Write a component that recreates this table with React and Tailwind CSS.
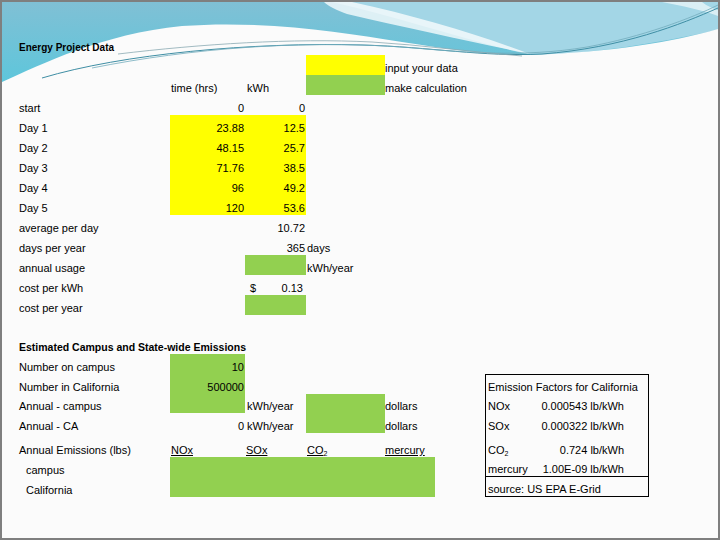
import React from 'react';

const Y = 'bg-[#ffff00]';
const G = 'bg-[#92d050]';

function Row({ h = 'h-[20px]', children }) {
  return (
    <div className={`grid grid-cols-[168px_75px_61px_79px_50px_50px_164px] ${h}`}>
      {children}
    </div>
  );
}

function Cell({ className = '', children }) {
  return (
    <div className={`flex items-end leading-[14px] whitespace-nowrap ${className}`}>
      {children}
    </div>
  );
}

const Label = ({ children, className = '' }) => <Cell className={`pl-[17px] ${className}`}>{children}</Cell>;
const Num = ({ children, className = '' }) => <Cell className={`justify-end pr-[1px] ${className}`}>{children}</Cell>;

const Wave = () => (
  <svg className="absolute left-0 top-0 pointer-events-none" width="716" height="100" viewBox="0 0 716 100">
    <defs>
      <linearGradient id="sky" x1="0" y1="0" x2="0" y2="1">
        <stop offset="0" stopColor="#80c0d5" />
        <stop offset="0.8" stopColor="#5ec6db" />
      </linearGradient>
    </defs>
    <rect width="716" height="100" fill="url(#sky)" />
    <path d="M330 0 L716 0 L716 28 C650 42 590 52 530 53 C470 40 400 16 330 0 Z" fill="#a3d6e6" />
    <path d="M322 0 L350 0 C415 14 478 33 528 52 C470 40 410 27 345 12 C334 8 326 4 322 0 Z" fill="#ffffff" opacity="0.75" />
    <path d="M660 0 L700 0 C705 4 710 6 716 8 L716 14 C700 8 680 4 660 0 Z" fill="#ffffff" opacity="0.6" />
    <path d="M0 80 C40 62 100 32 180 24 C260 18 340 30 400 40 C450 48 490 53 530 53 C610 50 670 40 716 27 L716 100 L0 100 Z" fill="#fbfbfb" />
    <path d="M40 76 C120 52 250 40 360 43 C430 45 480 55 540 52 C620 46 680 22 716 6" fill="none" stroke="#3f8ea4" strokeWidth="1" />
    <path d="M90 66 C190 46 300 38 400 45 C460 50 520 56 585 45 C640 35 690 16 716 3" fill="none" stroke="#72acbd" strokeWidth="0.8" />
    <path d="M116 52 C200 42 290 36 370 40 C420 43 470 50 520 54" fill="none" stroke="#8aa9b2" strokeWidth="0.8" />
  </svg>
);

export default function App() {
  return (
    <div
      className="relative w-[720px] h-[540px] overflow-hidden border-2 border-[#7f7f7f] bg-[#fbfbfb] text-[11px] text-black"
      style={{ fontFamily: '"Liberation Sans", Arial, sans-serif' }}
    >
      <Wave />
      <div className="relative flex flex-col">
        <div className="h-[39px]" />
        <Row h="h-[14px]">
          <Label className="font-bold text-[10px] col-span-3">Energy Project Data</Label>
        </Row>
        <Row>
          <Cell />
          <Cell />
          <Cell />
          <Cell className={Y} />
          <Cell className="col-span-3">input your data</Cell>
        </Row>
        <Row>
          <Cell />
          <Cell className="pl-[1px]">time (hrs)</Cell>
          <Cell className="pl-[2px]">kWh</Cell>
          <Cell className={G} />
          <Cell className="col-span-3">make calculation</Cell>
        </Row>
        <Row>
          <Label>start</Label>
          <Num>0</Num>
          <Num>0</Num>
        </Row>
        {[
          ['Day 1', '23.88', '12.5'],
          ['Day 2', '48.15', '25.7'],
          ['Day 3', '71.76', '38.5'],
          ['Day 4', '96', '49.2'],
          ['Day 5', '120', '53.6'],
        ].map(([d, t, k]) => (
          <Row key={d}>
            <Label>{d}</Label>
            <Num className={Y}>{t}</Num>
            <Num className={Y}>{k}</Num>
          </Row>
        ))}
        <Row>
          <Label>average per day</Label>
          <Cell />
          <Num>10.72</Num>
        </Row>
        <Row>
          <Label>days per year</Label>
          <Cell />
          <Num>365</Num>
          <Cell className="pl-[1px]">days</Cell>
        </Row>
        <Row>
          <Label>annual usage</Label>
          <Cell />
          <Cell className={G} />
          <Cell className="pl-[1px]">kWh/year</Cell>
        </Row>
        <Row>
          <Label>cost per kWh</Label>
          <Cell />
          <Cell className="justify-between pl-[5px] pr-[3px]">
            <span>$</span>
            <span>0.13</span>
          </Cell>
        </Row>
        <Row>
          <Label>cost per year</Label>
          <Cell />
          <Cell className={G} />
        </Row>
        <Row h="h-[19px]" />
        <Row>
          <Label className="font-bold text-[10.5px] col-span-4">Estimated Campus and State-wide Emissions</Label>
        </Row>
        <Row>
          <Label>Number on campus</Label>
          <Num className={G}>10</Num>
        </Row>
        <Row>
          <Label>Number in California</Label>
          <Num className={G}>500000</Num>
          <Cell />
          <Cell />
          <Cell />
          <Cell />
          <Cell className="border-x border-t border-black pl-[2px]">Emission Factors for California</Cell>
        </Row>
        <Row h="h-[19px]">
          <Label>Annual - campus</Label>
          <Cell className={G} />
          <Cell className="pl-[2px]">kWh/year</Cell>
          <Cell className={G} />
          <Cell>dollars</Cell>
          <Cell />
          <Cell className="border-x border-black pl-[2px] pr-[24px] justify-between">
            <span>NOx</span>
            <span>0.000543 lb/kWh</span>
          </Cell>
        </Row>
        <Row>
          <Label>Annual - CA</Label>
          <Num>0</Num>
          <Cell className="pl-[2px]">kWh/year</Cell>
          <Cell className={G} />
          <Cell>dollars</Cell>
          <Cell />
          <Cell className="border-x border-black pl-[2px] pr-[24px] justify-between">
            <span>SOx</span>
            <span>0.000322 lb/kWh</span>
          </Cell>
        </Row>
        <Row h="h-[24px]">
          <Label>Annual Emissions (lbs)</Label>
          <Cell className="pl-[1px]">
            <span className="underline">NOx</span>
          </Cell>
          <Cell className="pl-[1px]">
            <span className="underline">SOx</span>
          </Cell>
          <Cell className="pl-[1px]">
            <span className="underline">
              CO<sub className="text-[7px]">2</sub>
            </span>
          </Cell>
          <Cell>
            <span className="underline">mercury</span>
          </Cell>
          <Cell />
          <Cell className="border-x border-black pl-[2px] pr-[24px] justify-between">
            <span>
              CO<sub className="text-[7px]">2</sub>
            </span>
            <span>0.724 lb/kWh</span>
          </Cell>
        </Row>
        <Row>
          <Cell className="pl-[24px]">campus</Cell>
          <Cell className={`col-span-4 ${G}`} />
          <Cell />
          <Cell className="border-x border-b border-black pl-[2px] pr-[24px] justify-between">
            <span>mercury</span>
            <span>1.00E-09 lb/kWh</span>
          </Cell>
        </Row>
        <Row>
          <Cell className="pl-[24px]">California</Cell>
          <Cell className={`col-span-4 ${G}`} />
          <Cell />
          <Cell className="border-x border-b border-black pl-[2px]">source: US EPA E-Grid</Cell>
        </Row>
      </div>
    </div>
  );
}
